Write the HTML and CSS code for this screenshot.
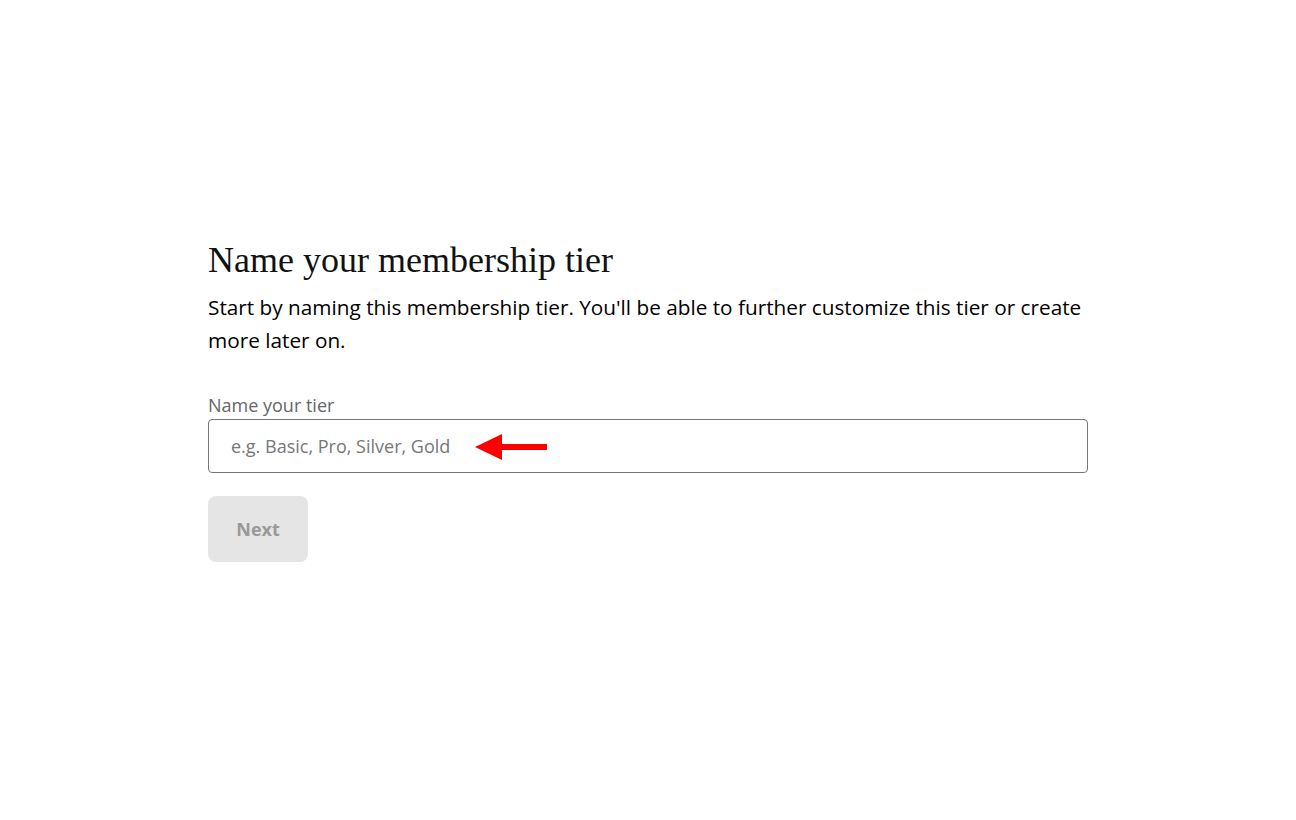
FILE: index.html
```html
<!DOCTYPE html>
<html lang="en">
<head>
    <meta charset="UTF-8">
    <meta name="viewport" content="width=device-width, initial-scale=1.0">
    <title>Name your membership tier</title>
    <link rel="stylesheet" href="styles.css">
</head>
<body>
    <div class="container">
        <h1>Name your membership tier</h1>
        <p class="intro">Start by naming this membership tier. You'll be able to further customize this tier or create more later on.</p>

        <form class="tier-form" onsubmit="return false">
            <label for="tierName">Name your tier</label>
            <div class="input-wrap">
                <input type="text" id="tierName" placeholder="e.g. Basic, Pro, Silver, Gold">
                <!-- red pointer arrow -->
                <svg class="pointer" width="74" height="28" viewBox="0 0 74 28">
                    <polygon points="0,14 27,1 27,11 72,11 72,17 27,17 27,27" fill="#f00"/>
                </svg>
            </div>
            <button type="submit" class="next-btn" disabled>Next</button>
        </form>
    </div>
</body>
</html>
```

FILE: styles.css
```css
body {
    margin: 0;
    background: #fff;
    font-family: "Open Sans", "Noto Sans", sans-serif;
    color: #000;
}
.container {
    width: 880px;
    margin: 0 auto;
    padding-top: 240px;
}
h1 {
    font-family: "Liberation Serif", "DejaVu Serif", serif;
    font-weight: normal;
    font-size: 36px;
    line-height: 40px;
    margin: 0 0 11px;
    color: #111;
}
.intro {
    font-size: 20.75px;
    line-height: 33px;
    margin: 0 0 36px;
}
.tier-form label {
    display: block;
    font-size: 18px;
    line-height: 24px;
    color: #666;
    margin-bottom: 2px;
}
.input-wrap {
    position: relative;
}
.input-wrap input {
    box-sizing: border-box;
    width: 100%;
    height: 54px;
    padding: 0 22px;
    border: 1px solid #777;
    border-radius: 4px;
    font-family: inherit;
    font-size: 18px;
    outline: none;
}
.input-wrap input::placeholder {
    color: #777;
}
.pointer {
    position: absolute;
    left: 267px;
    top: 14px;
}
.next-btn {
    margin-top: 23px;
    width: 100px;
    height: 66px;
    border: none;
    border-radius: 8px;
    background: #e5e5e5;
    color: #999;
    font-family: inherit;
    font-weight: bold;
    font-size: 18px;
}
```
